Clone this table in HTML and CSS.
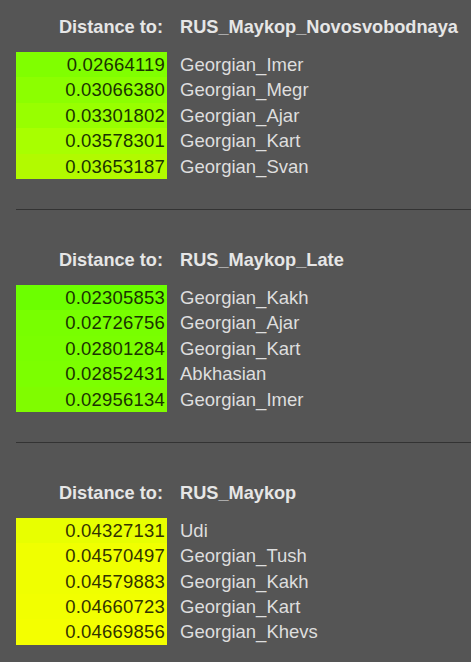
FILE: index.html
```
<!DOCTYPE html>
<html lang="en">

<head>
    <title>Distance to</title>
    <link rel="stylesheet" href="styles.css">
</head>

<body>
    <div class="result">
        <div class="result-head">
            <span class="label">Distance to:</span>
            <span class="target">RUS_Maykop_Novosvobodnaya</span>
        </div>
        <div class="rows">
            <div class="dist" style="background-color: #80ff00">0.02664119</div><div class="pop">Georgian_Imer</div>
            <div class="dist" style="background-color: #8cff00">0.03066380</div><div class="pop">Georgian_Megr</div>
            <div class="dist" style="background-color: #98ff00">0.03301802</div><div class="pop">Georgian_Ajar</div>
            <div class="dist" style="background-color: #a8ff00">0.03578301</div><div class="pop">Georgian_Kart</div>
            <div class="dist" style="background-color: #b2fa00">0.03653187</div><div class="pop">Georgian_Svan</div>
        </div>
    </div>

    <div class="result">
        <div class="result-head">
            <span class="label">Distance to:</span>
            <span class="target">RUS_Maykop_Late</span>
        </div>
        <div class="rows">
            <div class="dist" style="background-color: #6cff00">0.02305853</div><div class="pop">Georgian_Kakh</div>
            <div class="dist" style="background-color: #78ff00">0.02726756</div><div class="pop">Georgian_Ajar</div>
            <div class="dist" style="background-color: #7aff00">0.02801284</div><div class="pop">Georgian_Kart</div>
            <div class="dist" style="background-color: #7cff00">0.02852431</div><div class="pop">Abkhasian</div>
            <div class="dist" style="background-color: #80fc00">0.02956134</div><div class="pop">Georgian_Imer</div>
        </div>
    </div>

    <div class="result">
        <div class="result-head">
            <span class="label">Distance to:</span>
            <span class="target">RUS_Maykop</span>
        </div>
        <div class="rows yellow">
            <div class="dist" style="background-color: #e8ff00">0.04327131</div><div class="pop">Udi</div>
            <div class="dist" style="background-color: #f0ff00">0.04570497</div><div class="pop">Georgian_Tush</div>
            <div class="dist" style="background-color: #f0ff00">0.04579883</div><div class="pop">Georgian_Kakh</div>
            <div class="dist" style="background-color: #f2ff00">0.04660723</div><div class="pop">Georgian_Kart</div>
            <div class="dist" style="background-color: #f4ff00">0.04669856</div><div class="pop">Georgian_Khevs</div>
        </div>
    </div>
</body>
</html>
```

FILE: styles.css
```
body,
html {
    margin: 0;
    padding: 0;
    background-color: #555555;
    font-family: "Liberation Sans", Arial, sans-serif;
    font-size: 18.5px;
    overflow: hidden;
}

body {
    padding-top: 15px;
}

.result {
    margin-left: 16px;
    padding-bottom: 30px;
    border-bottom: 1px solid #333333;
}

.result + .result {
    padding-top: 38px;
}

.result-head {
    display: grid;
    grid-template-columns: 151px auto;
    column-gap: 13px;
    height: 24px;
    line-height: 24px;
    margin-bottom: 13px;
    font-size: 18.2px;
    font-weight: bold;
    color: #e6e6e6;
}

.label {
    text-align: right;
    padding-right: 4px;
}

.rows {
    display: grid;
    grid-template-columns: 151px auto;
    grid-auto-rows: 25.4px;
    column-gap: 13px;
    line-height: 25.4px;
}

.dist {
    text-align: right;
    padding-right: 2px;
    letter-spacing: 0.2px;
    color: #1a3300;
}

.yellow .dist {
    color: #333300;
}

.pop {
    color: #dedede;
}
```
